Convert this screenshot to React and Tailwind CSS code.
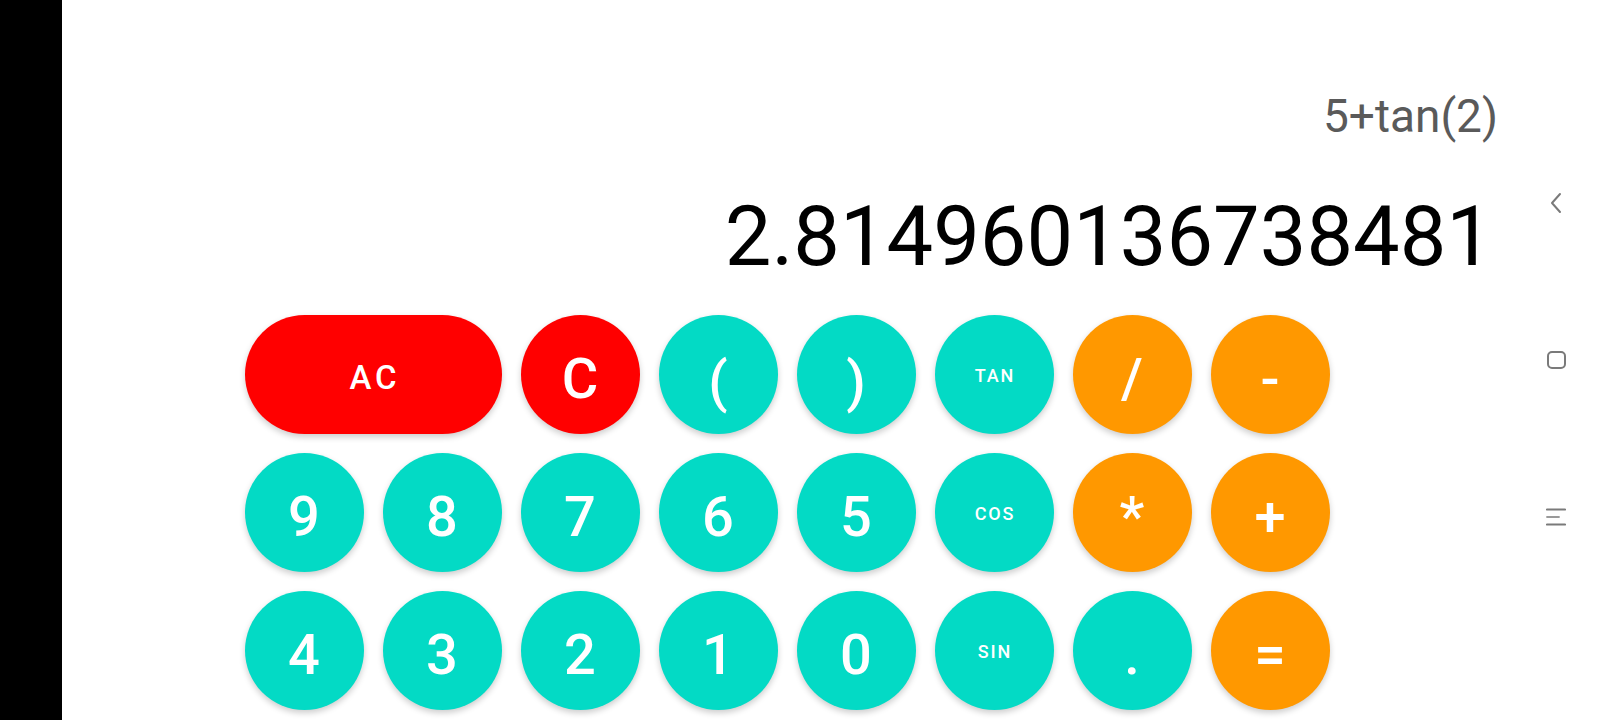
import React from "react";

const TEAL = "bg-[#03dac5]";
const ORANGE = "bg-[#ff9800]";
const RED = "bg-[#ff0000]";

const rows = [
  [
    { label: "AC", bg: RED, kind: "ac", wide: true },
    { label: "C", bg: RED, kind: "big" },
    { label: "(", bg: TEAL, kind: "paren" },
    { label: ")", bg: TEAL, kind: "paren" },
    { label: "TAN", bg: TEAL, kind: "fn" },
    { label: "/", bg: ORANGE, kind: "big" },
    { label: "-", bg: ORANGE, kind: "big" },
  ],
  [
    { label: "9", bg: TEAL, kind: "big" },
    { label: "8", bg: TEAL, kind: "big" },
    { label: "7", bg: TEAL, kind: "big" },
    { label: "6", bg: TEAL, kind: "big" },
    { label: "5", bg: TEAL, kind: "big" },
    { label: "COS", bg: TEAL, kind: "fn" },
    { label: "*", bg: ORANGE, kind: "big" },
    { label: "+", bg: ORANGE, kind: "big" },
  ],
  [
    { label: "4", bg: TEAL, kind: "big" },
    { label: "3", bg: TEAL, kind: "big" },
    { label: "2", bg: TEAL, kind: "big" },
    { label: "1", bg: TEAL, kind: "big" },
    { label: "0", bg: TEAL, kind: "big" },
    { label: "SIN", bg: TEAL, kind: "fn" },
    { label: ".", bg: TEAL, kind: "big" },
    { label: "=", bg: ORANGE, kind: "big" },
  ],
];

const textClass = {
  big: "text-[56px] translate-y-[4px]",
  paren: "text-[56px] translate-y-[7px]",
  ac: "text-[33px] tracking-[0.12em] translate-y-[3px] pl-[0.12em]",
  fn: "text-[18px] tracking-[0.1em] translate-y-[1px] pl-[0.1em]",
};

function Key({ label, bg, kind, wide }) {
  return (
    <button
      className={`${bg} ${wide ? "col-span-2" : ""} h-[119px] rounded-full flex items-center justify-center text-white font-medium shadow-[0_3px_6px_rgba(0,0,0,0.2)]`}
    >
      <span className={`${textClass[kind]} leading-none`}>{label}</span>
    </button>
  );
}

function NavBar() {
  return (
    <div className="w-[88px] flex flex-col items-center justify-center gap-[133px]">
      <div className="h-[24px] flex items-center">
        <svg width="14" height="22" viewBox="0 0 14 22" fill="none">
          <path d="M11 2 L3 11 L11 20" stroke="#7a7a7a" strokeWidth="2" strokeLinecap="round" strokeLinejoin="round" />
        </svg>
      </div>
      <div className="h-[24px] flex items-center">
        <div className="w-[19px] h-[18px] rounded-[5px] border-[2.5px] border-[#7a7a7a]" />
      </div>
      <div className="h-[24px] flex items-center">
        <svg width="20" height="18" viewBox="0 0 20 18" fill="none">
          <path d="M1 1.5 H19" stroke="#7a7a7a" strokeWidth="2.2" strokeLinecap="round" />
          <path d="M1 9 H13" stroke="#9a9a9a" strokeWidth="1.8" strokeLinecap="round" />
          <path d="M1 16.5 H19" stroke="#7a7a7a" strokeWidth="2.2" strokeLinecap="round" />
        </svg>
      </div>
    </div>
  );
}

export default function App() {
  return (
    <div className="w-[1600px] h-[720px] flex bg-white overflow-hidden font-['Roboto','Liberation_Sans',sans-serif]">
      <div className="w-[62px] bg-black" />

      <main className="flex-1 flex flex-col">
        {/* Display */}
        <div className="pt-[89px] pr-[14px] text-right text-[46px] leading-[54px] text-[#5a5a5a]">
          5+tan(2)
        </div>
        <div className="mt-[45px] pr-[19px] text-right text-[83px] leading-[97px] text-black">
          2.814960136738481
        </div>

        {/* Keypad */}
        <div className="mt-[30px] flex justify-center">
          <div className="grid grid-cols-[repeat(8,119px)] gap-x-[19px] gap-y-[19px]">
            {rows.flat().map((k, i) => (
              <Key key={i} {...k} />
            ))}
          </div>
        </div>
      </main>

      <NavBar />
    </div>
  );
}
